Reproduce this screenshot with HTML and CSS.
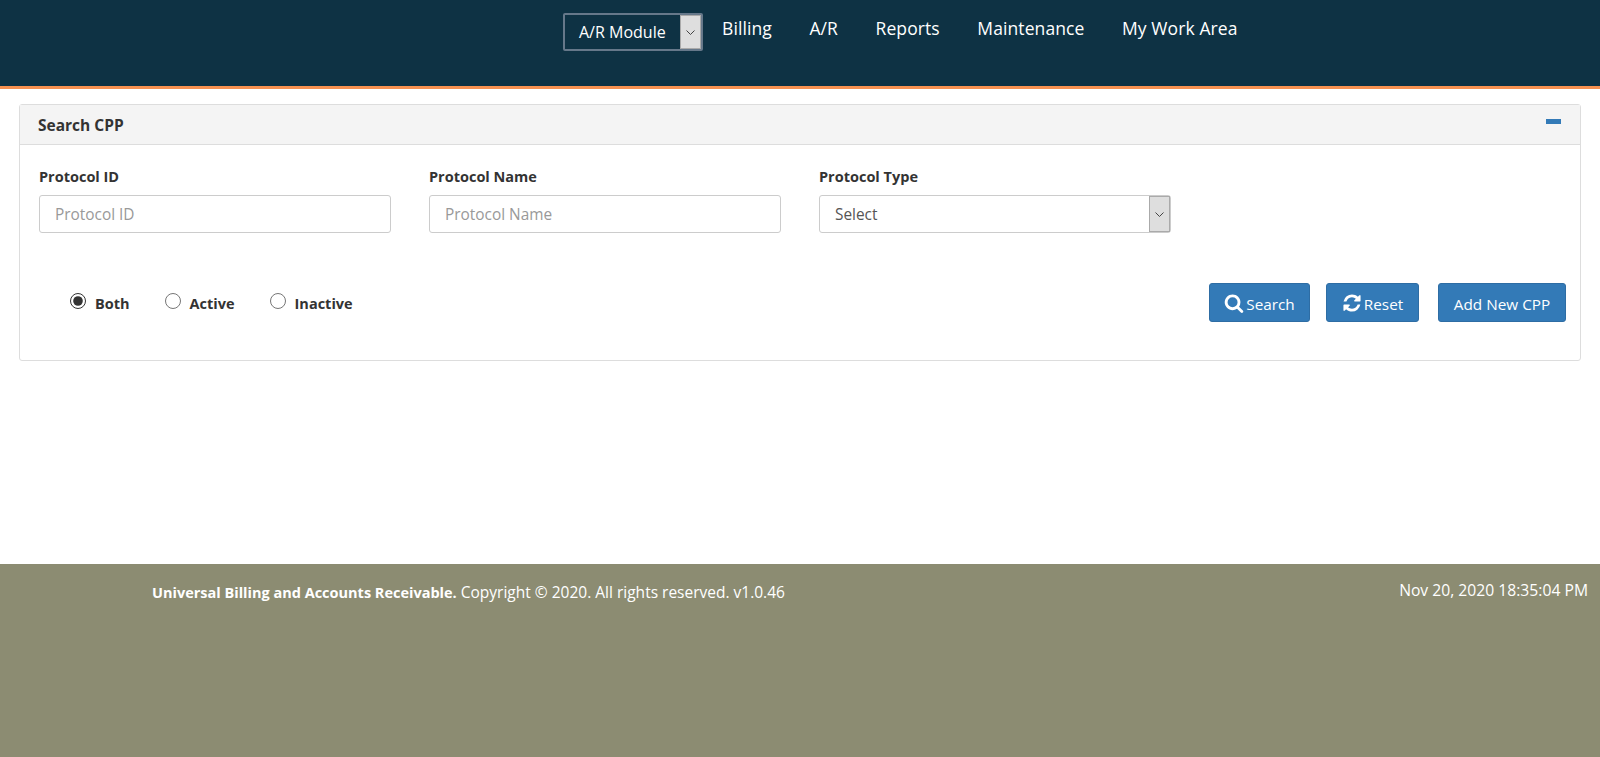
FILE: index.html
```html
<!DOCTYPE html>
<html lang="en">
<head>
  <meta charset="utf-8">
  <title>Search CPP</title>
  <link rel="stylesheet" href="styles.css">
</head>
<body>
<header class="topbar">
  <div class="module-select">
    <span class="module-value">A/R Module</span>
    <span class="select-arrow">
      <svg width="9" height="5" viewBox="0 0 9 5"><path d="M.5 .5l4 4 4-4" fill="none" stroke="#444"/></svg>
    </span>
  </div>
  <nav class="main-nav">
    <a href="#">Billing</a>
    <a href="#">A/R</a>
    <a href="#">Reports</a>
    <a href="#">Maintenance</a>
    <a href="#">My Work Area</a>
  </nav>
</header>

<main class="content">
  <section class="panel">
    <div class="panel-head">
      <h2>Search CPP</h2>
      <span class="collapse-icon"></span>
    </div>
    <div class="panel-body">
      <div class="fields">
        <div class="field">
          <label for="pid">Protocol ID</label>
          <input id="pid" type="text" placeholder="Protocol ID">
        </div>
        <div class="field">
          <label for="pname">Protocol Name</label>
          <input id="pname" type="text" placeholder="Protocol Name">
        </div>
        <div class="field">
          <label>Protocol Type</label>
          <div class="type-select">
            <span class="type-value">Select</span>
            <span class="select-arrow">
              <svg width="9" height="5" viewBox="0 0 9 5"><path d="M.5 .5l4 4 4-4" fill="none" stroke="#444"/></svg>
            </span>
          </div>
        </div>
      </div>
      <div class="actions">
        <div class="radios">
          <label class="radio"><input type="radio" name="status" checked>Both</label>
          <label class="radio"><input type="radio" name="status">Active</label>
          <label class="radio"><input type="radio" name="status">Inactive</label>
        </div>
        <div class="buttons">
          <button class="btn btn-search" type="button">
            <svg width="20" height="20" viewBox="0 0 1792 1792"><path fill="#fff" d="M1216 832q0-185-131.500-316.500t-316.500-131.500-316.500 131.500-131.500 316.500 131.500 316.500 316.500 131.500 316.500-131.500 131.500-316.500zm512 832q0 52-38 90t-90 38q-54 0-90-38l-343-342q-179 124-399 124-143 0-273.500-55.500t-225-150-150-225-55.500-273.500 55.500-273.500 150-225 225-150 273.500-55.500 273.500 55.500 225 150 150 225 55.500 273.500q0 220-124 399l343 343q37 37 37 90z"/></svg>
            <span class="btn-text">Search</span>
          </button>
          <button class="btn btn-reset" type="button">
            <svg width="20" height="20" viewBox="0 0 1792 1792"><path fill="#fff" d="M1639 1056q0 5-1 7-64 268-268 434.500t-478 166.500q-146 0-282.500-55t-243.500-157l-129 129q-19 19-45 19t-45-19-19-45v-448q0-26 19-45t45-19h448q26 0 45 19t19 45-19 45l-137 137q71 66 161 102t187 36q134 0 250-65t186-179q11-17 53-117 8-23 30-23h192q13 0 22.500 9.500t9.500 22.500zm25-800v448q0 26-19 45t-45 19h-448q-26 0-45-19t-19-45 19-45l138-138q-148-137-349-137-134 0-250 65t-186 179q-11 17-53 117-8 23-30 23h-199q-13 0-22.500-9.500t-9.500-22.500v-7q65-268 270-434.500t480-166.500q146 0 284 55.500t245 156.500l130-129q19-19 45-19t45 19 19 45z"/></svg>
            <span class="btn-text">Reset</span>
          </button>
          <button class="btn btn-add" type="button"><span class="btn-text">Add New CPP</span></button>
        </div>
      </div>
    </div>
  </section>
</main>

<footer class="footer">
  <div class="copyright"><b>Universal Billing and Accounts Receivable.</b> Copyright © 2020. All rights reserved. v1.0.46</div>
  <div class="clock">Nov 20, 2020 18:35:04 PM</div>
</footer>
</body>
</html>
```

FILE: styles.css
```css
html, body {
    height: 100%;
}

body {
    margin: 0;
    display: flex;
    flex-direction: column;
    overflow: hidden;
    background: #fff;
    color: #333;
    font-family: "Open Sans", "Noto Sans", sans-serif;
    font-size: 15px;
}

.topbar {
    display: flex;
    box-sizing: border-box;
    height: 89px;
    padding: 13px 0 0 563px;
    background: #0e3244;
    border-bottom: 3px solid #f79151;
}

.module-select {
    display: flex;
    box-sizing: border-box;
    width: 140px;
    height: 38px;
    border: 2px solid #66788a;
    border-radius: 2px;
    color: #fff;
}

.module-value {
    flex: 1;
    padding-left: 14px;
    line-height: 34px;
    font-size: 16px;
}

.select-arrow {
    display: flex;
    align-items: center;
    justify-content: center;
    box-sizing: border-box;
    width: 21px;
    background: #dedede;
    border: 1px solid #aaa;
}

.main-nav {
    display: flex;
    gap: 37.5px;
    margin-left: 19px;
}

.main-nav a {
    color: #fff;
    font-size: 17.5px;
    letter-spacing: .1px;
    line-height: 31px;
    text-decoration: none;
}

.content {
    flex: 1;
    padding: 15px 19px 0;
}

.panel {
    box-sizing: border-box;
    height: 257px;
    border: 1px solid #ddd;
    border-radius: 3px;
}

.panel-head {
    display: flex;
    justify-content: space-between;
    box-sizing: border-box;
    height: 40px;
    padding: 0 19px 0 18px;
    background: #f4f4f4;
    border-bottom: 1px solid #ddd;
}

.panel-head h2 {
    margin: 0;
    font-size: 15.5px;
    font-weight: 700;
    line-height: 40px;
}

.collapse-icon {
    width: 15px;
    height: 5px;
    margin-top: 14px;
    background: #337ab7;
}

.panel-body {
    padding: 20px 14px 0 19px;
}

.fields {
    display: flex;
    gap: 38px;
}

.field {
    width: 352px;
}

.field label {
    display: block;
    margin-bottom: 7px;
    font-size: 14.5px;
    font-weight: 700;
    line-height: 23px;
}

.field input, .type-select {
    display: block;
    box-sizing: border-box;
    width: 352px;
    height: 38px;
    border: 1px solid #ccc;
    border-radius: 3px;
    color: #555;
    font: inherit;
    font-size: 15.4px;
}

.field input {
    padding: 0 15px;
}

.field input::placeholder {
    color: #999;
    opacity: 1;
}

.type-select {
    display: flex;
}

.type-value {
    flex: 1;
    padding-left: 15px;
    line-height: 38px;
}

.actions {
    display: flex;
    justify-content: space-between;
    margin-top: 50px;
}

.radios {
    display: flex;
    padding: 10px 0 0 31px;
}

.radio {
    display: flex;
    align-items: flex-start;
    height: 24px;
    margin-right: 35px;
    font-size: 14.5px;
    font-weight: 700;
    line-height: 22px;
}

.radio input {
    width: 16px;
    height: 16px;
    margin: 0 9px 0 0;
    accent-color: #333;
}

.buttons {
    display: flex;
}

.btn {
    display: flex;
    align-items: center;
    justify-content: center;
    gap: 2px;
    box-sizing: border-box;
    height: 39px;
    padding: 0;
    background: #337ab7;
    border: 1px solid #2e6da4;
    border-radius: 3px;
    color: #fff;
    font: inherit;
    font-size: 15.3px;
}

.btn-text {
    padding-top: 2px;
}

.btn-search {
    width: 101px;
    margin-right: 16px;
}

.btn-reset {
    width: 93px;
    margin-right: 19px;
}

.btn-add {
    width: 128px;
}

.footer {
    display: flex;
    justify-content: space-between;
    box-sizing: border-box;
    height: 193px;
    padding: 18px 12px 0 152px;
    background: #8c8c72;
    color: #fff;
}

.copyright {
    font-size: 15.5px;
    line-height: 20px;
}

.copyright b {
    font-size: 14.5px;
    font-weight: 700;
}

.clock {
    margin-top: -2px;
    font-size: 15.7px;
    line-height: 20px;
}
```
